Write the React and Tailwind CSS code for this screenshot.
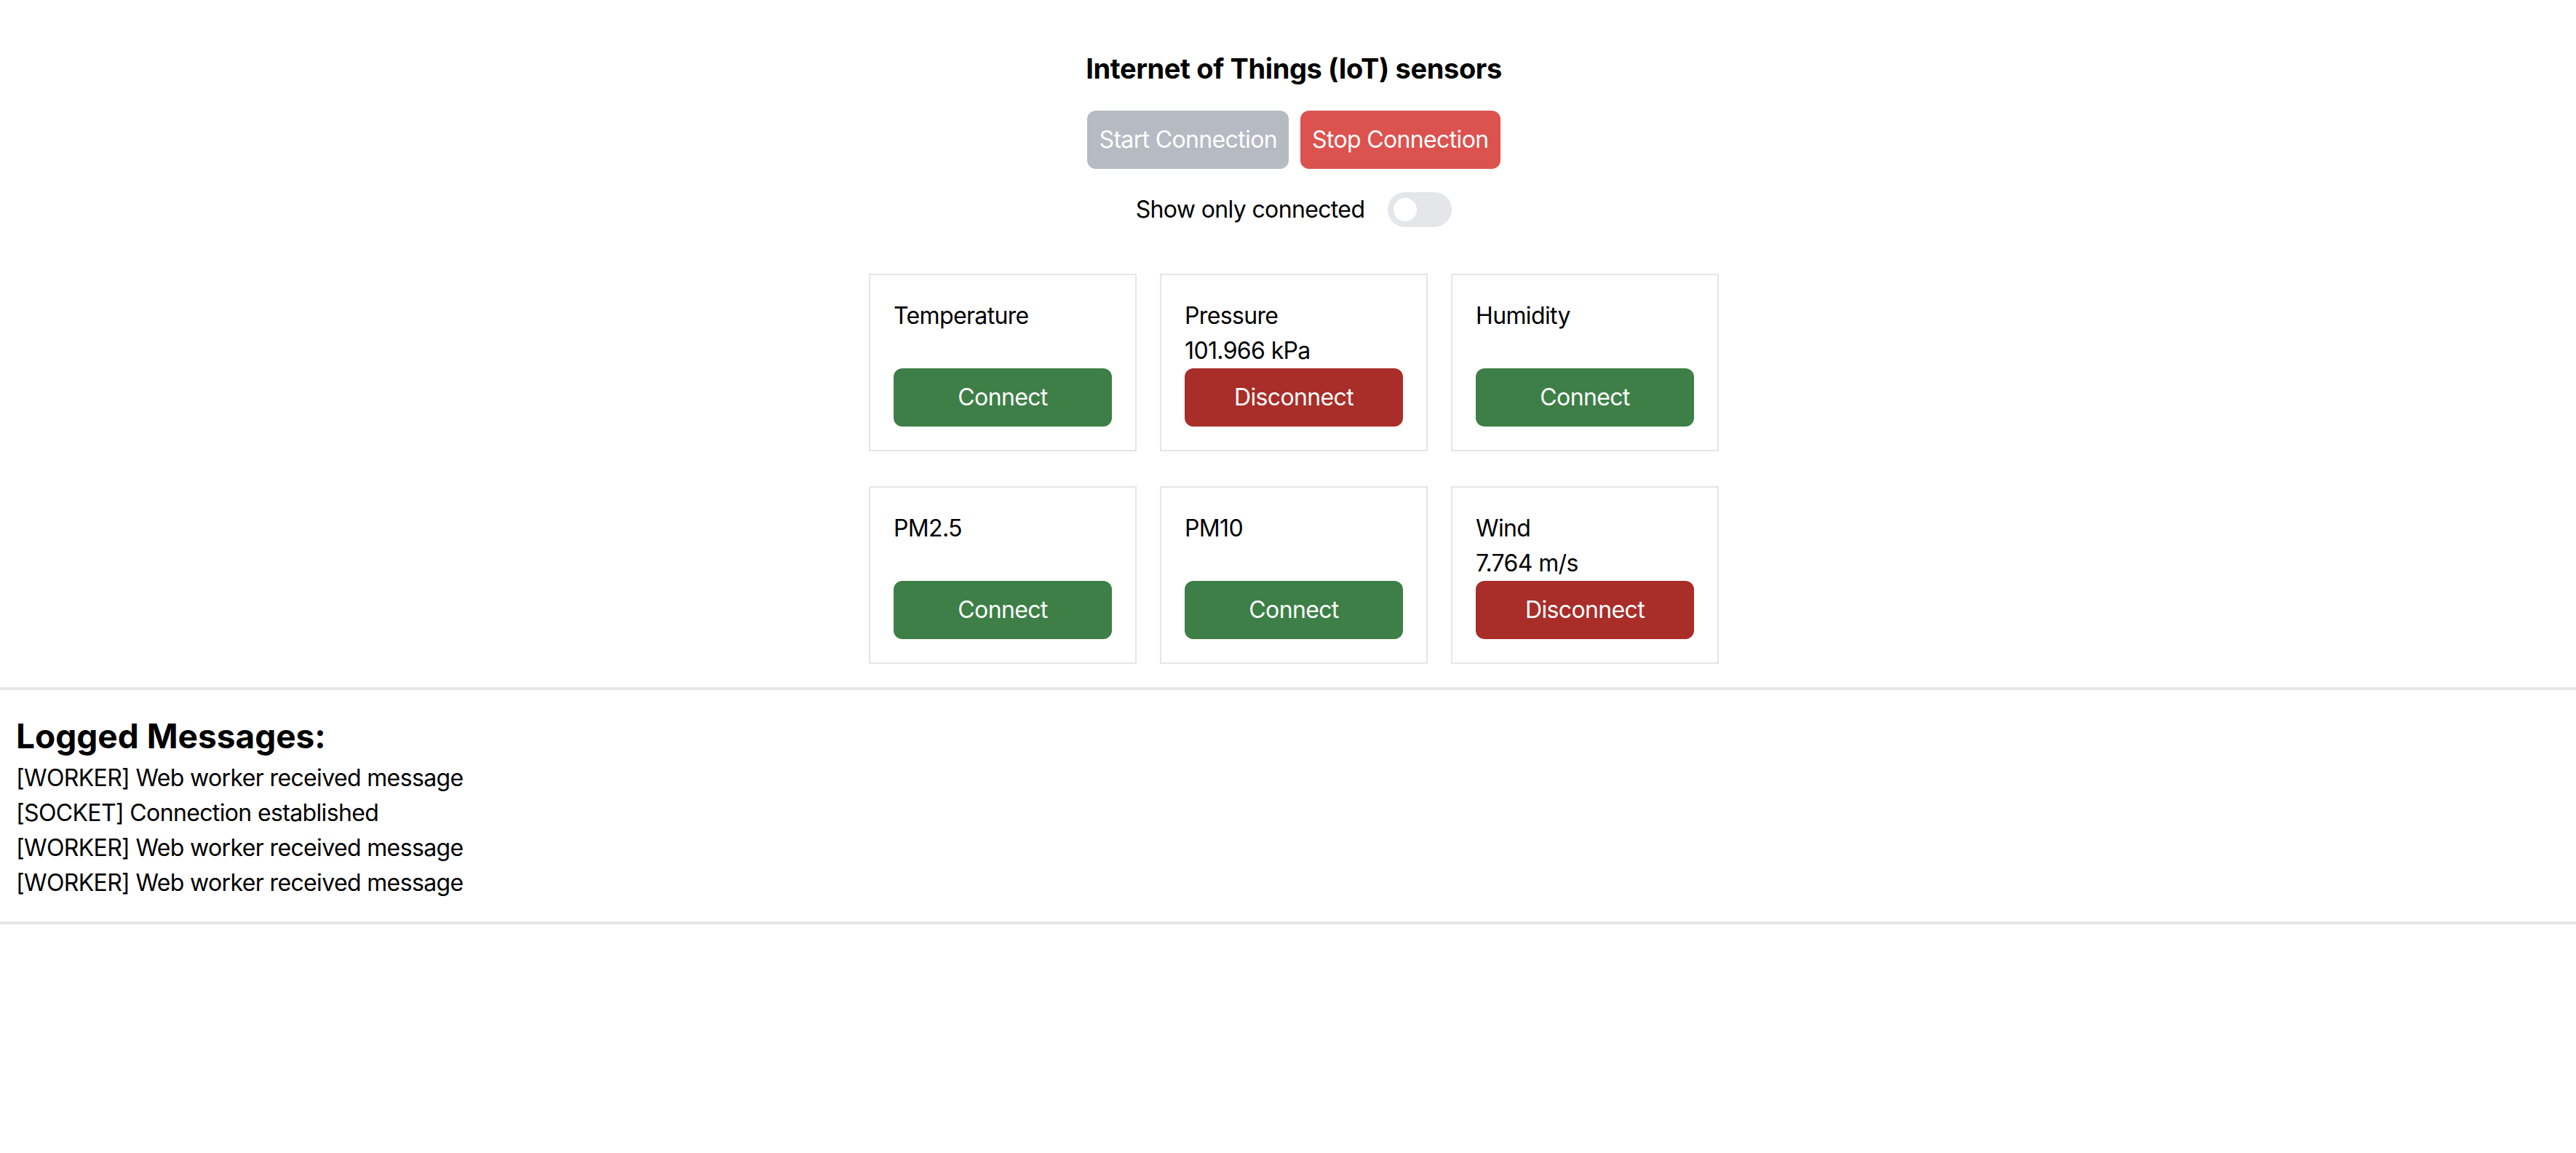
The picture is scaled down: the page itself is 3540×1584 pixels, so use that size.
import { useState } from 'react';

const initialSensors = [
  { id: 'temperature', name: 'Temperature', connected: false, value: null },
  { id: 'pressure', name: 'Pressure', connected: true, value: '101.966 kPa' },
  { id: 'humidity', name: 'Humidity', connected: false, value: null },
  { id: 'pm25', name: 'PM2.5', connected: false, value: null },
  { id: 'pm10', name: 'PM10', connected: false, value: null },
  { id: 'wind', name: 'Wind', connected: true, value: '7.764 m/s' },
];

const messages = [
  '[WORKER] Web worker received message',
  '[SOCKET] Connection established',
  '[WORKER] Web worker received message',
  '[WORKER] Web worker received message',
];

function SensorCard({ sensor, onToggle }) {
  return (
    <div className="w-[368px] border-2 border-[#e5e5ea] p-[32px]">
      <div className="leading-[48px]">{sensor.name}</div>
      <div className="h-[48px] leading-[48px]">{sensor.value}</div>
      <button
        type="button"
        onClick={() => onToggle(sensor.id)}
        className={
          sensor.connected
            ? 'h-[80px] w-full rounded-[12px] bg-[#a92d28] text-white'
            : 'h-[80px] w-full rounded-[12px] bg-[#3d7f46] text-white'
        }
      >
        {sensor.connected ? 'Disconnect' : 'Connect'}
      </button>
    </div>
  );
}

export default function App() {
  const [sensors, setSensors] = useState(initialSensors);
  const [onlyConnected, setOnlyConnected] = useState(false);

  const toggleSensor = (id) => {
    setSensors((prev) =>
      prev.map((s) => (s.id === id ? { ...s, connected: !s.connected } : s))
    );
  };

  const visible = onlyConnected ? sensors.filter((s) => s.connected) : sensors;

  return (
    <div className="min-h-screen bg-white text-[32px] tracking-[-0.02em] text-black font-['Inter',sans-serif]">
      {/* Header + sensors */}
      <div className="flex flex-col items-center pl-[16px] pt-[70px]">
        <h1 className="text-[38px] font-bold leading-[48px] tracking-[-0.01em]">
          Internet of Things (IoT) sensors
        </h1>

        <div className="mt-[34px] flex gap-[16px]">
          <button
            type="button"
            disabled
            className="h-[80px] rounded-[12px] bg-[#b6bac2] px-[16px] text-white"
          >
            Start Connection
          </button>
          <button
            type="button"
            className="h-[80px] rounded-[12px] bg-[#dc524e] px-[16px] text-white"
          >
            Stop Connection
          </button>
        </div>

        <div className="mt-[32px] flex h-[48px] items-center gap-[32px]">
          <span>Show only connected</span>
          <button
            type="button"
            onClick={() => setOnlyConnected(!onlyConnected)}
            className="flex h-[48px] w-[88px] items-center rounded-full bg-[#e5e6ea] px-[8px]"
          >
            <span className="h-[32px] w-[32px] rounded-full bg-white" />
          </button>
        </div>

        <div className="mt-[64px] grid grid-cols-3 gap-x-[32px] gap-y-[48px]">
          {visible.map((s) => (
            <SensorCard key={s.id} sensor={s} onToggle={toggleSensor} />
          ))}
        </div>
      </div>

      <div className="mt-[32px] h-[4px] bg-[#e5e5ea]" />

      {/* Logs */}
      <div className="pb-[29px] pl-[22px] pt-[37px]">
        <h2 className="text-[46px] font-bold leading-[52px] tracking-[0em]">Logged Messages:</h2>
        <div className="mt-[8px]">
          {messages.map((m, i) => (
            <div key={i} className="leading-[48px]">
              {m}
            </div>
          ))}
        </div>
      </div>

      <div className="h-[4px] bg-[#e5e5ea]" />
    </div>
  );
}
